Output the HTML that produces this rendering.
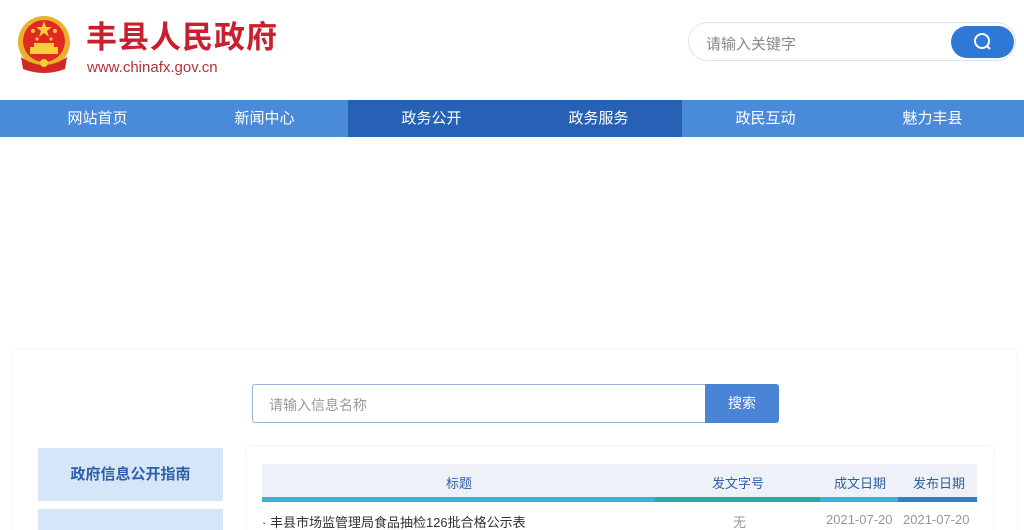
<!DOCTYPE html>
<html><head><meta charset="utf-8"><style>
*{margin:0;padding:0;box-sizing:border-box}
html,body{width:1024px;height:530px;overflow:hidden}
body{background:#fff;font-family:"Liberation Sans","Noto Sans CJK SC",sans-serif;position:relative}
.abs{position:absolute}
.title{left:86px;top:18px;font-size:31px;font-weight:bold;color:#c8202e;letter-spacing:1px;line-height:40px}
.url{left:87px;top:59px;font-size:15px;color:#b8303a;line-height:18px}
.search{left:688px;top:22px;width:328px;height:39px;border:1px solid #dde3ea;border-radius:20px;background:#fff}
.search span{position:absolute;left:17px;top:10px;font-size:15px;color:#888}
.sbtn{position:absolute;right:1px;top:3px;width:63px;height:32px;border-radius:16px;background:#2f78d6}
.navbg{left:0;top:100px;width:1024px;height:37px;background:#4a8bd9}
.nav{left:14px;top:100px;width:1002px;height:37px;display:flex}
.nav div{width:167px;color:#fff;font-size:15px;text-align:center;line-height:37px}
.nav .a{background:#2661b6}
.card{left:14px;top:350px;width:1002px;height:200px;background:#fff;box-shadow:0 0 6px rgba(0,0,0,.07)}
.inp{left:252px;top:384px;width:453px;height:39px;border:1px solid #9bb3d6;border-right:none;border-radius:3px 0 0 3px}
.inp span{position:absolute;left:16px;top:10px;font-size:14px;color:#999}
.btn{left:705px;top:384px;width:74px;height:39px;background:#4a84d6;color:#fff;font-size:14px;text-align:center;line-height:39px;border-radius:0 3px 3px 0}
.side{left:38px;width:185px;background:#d4e6f8;color:#2d5fa8;font-size:15px;font-weight:bold;text-align:center}
.tbl{left:247px;top:447px;width:746px;height:100px;background:#fff;box-shadow:0 0 5px rgba(0,0,0,.08)}
.th{left:262px;top:464px;width:715px;height:35px;background:#eef2f8;font-size:13px;color:#2d5fa8}
.th span{position:absolute;top:9px}
.bar{top:497px;height:5px}
.row{top:512px;font-size:13px;color:#333}
</style></head><body>
<svg class="abs" style="left:15px;top:13px" width="58" height="62" viewBox="0 0 58 62">
<circle cx="29" cy="29" r="26" fill="#e9b22a"/>
<circle cx="29" cy="28" r="21" fill="#de2a20"/>
<polygon points="29,8 31,14 37,14 32,18 34,24 29,20 24,24 26,18 21,14 27,14" fill="#f5d03a"/>
<circle cx="18" cy="18" r="2" fill="#f5d03a"/><circle cx="40" cy="18" r="2" fill="#f5d03a"/>
<circle cx="22" cy="26" r="1.6" fill="#f5d03a"/><circle cx="36" cy="26" r="1.6" fill="#f5d03a"/>
<rect x="15" y="34" width="28" height="7" fill="#f5d03a"/><rect x="19" y="30" width="20" height="4" fill="#f5d03a"/>
<path d="M6,44 Q29,60 52,44 L50,56 Q29,64 8,56 Z" fill="#d22a22"/>
<circle cx="29" cy="50" r="4" fill="#f5d03a"/>
</svg>
<div class="abs title">丰县人民政府</div>
<div class="abs url">www.chinafx.gov.cn</div>
<div class="abs search"><span>请输入关键字</span><div class="sbtn">
<svg width="63" height="32" viewBox="0 0 63 32"><circle cx="31" cy="15" r="7" stroke="#fff" stroke-width="2" fill="none"/><line x1="36" y1="20" x2="39" y2="23" stroke="#fff" stroke-width="2"/></svg></div></div>
<div class="abs navbg"></div>
<div class="abs nav"><div>网站首页</div><div>新闻中心</div><div class="a">政务公开</div><div class="a">政务服务</div><div>政民互动</div><div>魅力丰县</div></div>
<div class="abs card"></div>
<div class="abs inp"><span>请输入信息名称</span></div>
<div class="abs btn">搜索</div>
<div class="abs side" style="top:448px;height:53px;line-height:53px">政府信息公开指南</div>
<div class="abs side" style="top:509px;height:40px;line-height:40px;padding-top:10px">政府信息公开制度</div>
<div class="abs tbl"></div>
<div class="abs th"><span style="left:184px">标题</span><span style="left:450px">发文字号</span><span style="left:572px">成文日期</span><span style="left:651px">发布日期</span></div>
<div class="abs bar" style="left:262px;width:393px;background:#3bb0d8"></div>
<div class="abs bar" style="left:655px;width:165px;background:#27a8b0"></div>
<div class="abs bar" style="left:820px;width:78px;background:#3bb0d8"></div>
<div class="abs bar" style="left:898px;width:79px;background:#2e7fc8"></div>
<div class="abs row" style="left:262px">· 丰县市场监管理局食品抽检126批合格公示表</div>
<div class="abs row" style="left:733px;color:#999">无</div>
<div class="abs row" style="left:826px;color:#999">2021-07-20</div>
<div class="abs row" style="left:903px;color:#999">2021-07-20</div>
</body></html>
